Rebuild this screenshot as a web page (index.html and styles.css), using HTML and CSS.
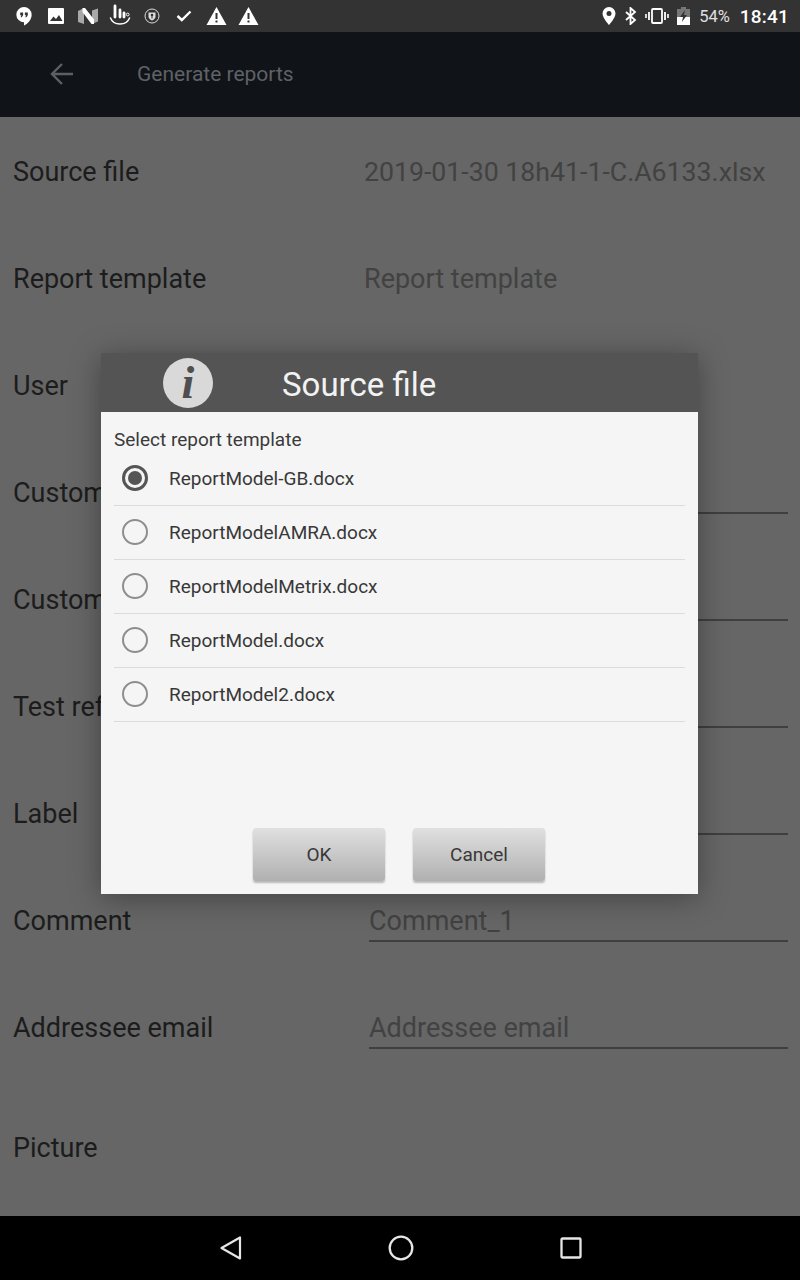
FILE: index.html
```html
<!DOCTYPE html>
<html lang="en">
<head>
    <meta charset="UTF-8">
    <meta name="viewport" content="width=device-width, initial-scale=1.0">
    <title>Generate reports</title>
    <link rel="stylesheet" href="styles.css">
</head>
<body>
    <div class="screen">
        <div class="status-bar">
            <div class="status-left">
                <span class="status-icon">
                    <svg width="18" height="20" viewBox="0 0 20 22"><path d="M10 1a8.500 8.500 0 0 0-8.500 8.500A8.500 8.500 0 0 0 10 18v3.500c4.500-2 8.500-7 8.500-12A8.500 8.500 0 0 0 10 1z" fill="#fff"/><path d="M5.800 7h3.200v3.200l-1.500 2.300H6.200l1-2.300H5.800zM11 7h3.200v3.200l-1.500 2.300h-1.300l1-2.300H11z" fill="#333"/></svg>
                </span>
                <span class="status-icon">
                    <svg width="18" height="18" viewBox="0 0 18 18"><path d="M2 1h14a1 1 0 0 1 1 1v14a1 1 0 0 1-1 1H2a1 1 0 0 1-1-1V2a1 1 0 0 1 1-1z" fill="#fff"/><path d="M3 14l3.500-4.500 2.500 2.500 3-4 3.500 6z" fill="#333"/></svg>
                </span>
                <span class="status-icon">
                    <svg width="20" height="16" viewBox="0 0 20 16"><path d="M0 3l6-3v16l-6-2z" fill="#a8a8a8"/><path d="M14 2.500l6-2v13l-6 2.500z" fill="#a8a8a8"/><path d="M4.500 0h2.500l9 11.500V16h-2.500L4.500 4z" fill="#fff"/></svg>
                </span>
                <span class="status-icon">
                    <svg width="22" height="24" viewBox="0 2 22 24" fill="none" stroke="#fff"><path d="M1.500 16c1.500 4 5 6 9.500 6s8-2 9.500-6" stroke-width="1.500" stroke-linecap="round"/><path d="M6 4v11M11 8v7M15 11v4" stroke-width="2.800" stroke-linecap="round"/><circle cx="18.700" cy="12.500" r="1.400" stroke-width="1"/></svg>
                </span>
                <span class="status-icon">
                    <svg width="16" height="16" viewBox="0 0 16 16" fill="none"><circle cx="8" cy="8" r="7" stroke="#ddd" stroke-width="1"/><path d="M4.500 4.500h7v4c0 2-2 3.500-3.500 4-1.500-.5-3.500-2-3.500-4z" fill="#ddd"/><circle cx="8" cy="7" r="1.300" fill="#333"/><path d="M7.500 8h1v2.500h-1z" fill="#333"/></svg>
                </span>
                <span class="status-icon">
                    <svg width="16" height="12" viewBox="0 0 16 12" fill="none"><path d="M1.500 6l4.300 4 8.700-8.500" stroke="#fff" stroke-width="2.400"/></svg>
                </span>
                <span class="status-icon">
                    <svg width="21" height="18" viewBox="0 0 20 18"><path d="M10 0l10 18H0z" fill="#fff"/><path d="M9 6h2v6H9zM9 13.500h2v2H9z" fill="#333"/></svg>
                </span>
                <span class="status-icon">
                    <svg width="21" height="18" viewBox="0 0 20 18"><path d="M10 0l10 18H0z" fill="#fff"/><path d="M9 6h2v6H9zM9 13.500h2v2H9z" fill="#333"/></svg>
                </span>
            </div>
            <div class="status-right">
                <svg class="pin" width="14" height="18" viewBox="0 0 14 18"><path fill-rule="evenodd" d="M7 0a6.500 6.500 0 0 0-6.500 6.500C.5 11 7 18 7 18s6.500-7 6.500-11.500A6.500 6.500 0 0 0 7 0zm0 4a2.500 2.500 0 1 1 0 5 2.500 2.500 0 0 1 0-5z" fill="#fff"/></svg>
                <svg class="bluetooth" width="12" height="18" viewBox="0 0 12 18" fill="none"><path d="M1 5l9 8-4.500 4V1L10 5l-9 8" stroke="#fff" stroke-width="1.800"/></svg>
                <svg class="vibrate" width="24" height="16" viewBox="0 0 24 16" fill="none" stroke="#fff"><rect x="7" y="1" width="10" height="14" rx="1" stroke-width="1.800"/><path d="M4 4v8M20 4v8" stroke-width="1.800"/><path d="M1 6v4M23 6v4" stroke-width="1.600"/></svg>
                <svg class="battery" width="13" height="18" viewBox="0 0 13 18"><path d="M4 0h5v2h4v16H0V2h4z" fill="#777"/><path d="M0 10h13v8H0z" fill="#fff"/><path d="M8 3L3 10h3l-1 5 5-7H7z" fill="#333"/></svg>
                <span class="battery-level">54%</span>
                <span class="clock">18:41</span>
            </div>
        </div>

        <header class="app-bar">
            <svg class="back" width="24" height="24" viewBox="0 0 24 24" fill="none"><path d="M23 12H2M12 2L2 12l10 10" stroke="#5d6063" stroke-width="2.400"/></svg>
            <h1>Generate reports</h1>
        </header>

        <div class="form">
            <div class="row">
                <div class="label">Source file</div>
                <div class="value value-file">2019-01-30 18h41-1-C.A6133.xlsx</div>
            </div>
            <div class="row">
                <div class="label">Report template</div>
                <div class="value">Report template</div>
            </div>
            <div class="row">
                <div class="label">User</div>
                <div class="value"></div>
            </div>
            <div class="row">
                <div class="label">Customer</div>
                <div class="field"></div>
            </div>
            <div class="row">
                <div class="label">Customer</div>
                <div class="field"></div>
            </div>
            <div class="row">
                <div class="label">Test ref</div>
                <div class="field"></div>
            </div>
            <div class="row">
                <div class="label">Label</div>
                <div class="field"></div>
            </div>
            <div class="row">
                <div class="label">Comment</div>
                <div class="field">Comment_1</div>
            </div>
            <div class="row">
                <div class="label">Addressee email</div>
                <div class="field">Addressee email</div>
            </div>
            <div class="row row-last">
                <div class="label">Picture</div>
            </div>
        </div>

        <nav class="nav-bar">
            <svg width="24" height="26" viewBox="0 0 24 26" fill="none"><path d="M21 2.500v21L2.500 13z" stroke="#e6e6e6" stroke-width="2.200" stroke-linejoin="round"/></svg>
            <svg width="26" height="26" viewBox="0 0 26 26" fill="none"><circle cx="13" cy="13" r="11.300" stroke="#e6e6e6" stroke-width="2.300"/></svg>
            <svg width="24" height="24" viewBox="0 0 24 24" fill="none"><rect x="2.500" y="2.500" width="19" height="19" rx="1" stroke="#e6e6e6" stroke-width="2.300"/></svg>
        </nav>

        <div class="dialog">
            <div class="dialog-head">
                <span class="info-icon">i</span>
                <h2>Source file</h2>
            </div>
            <div class="dialog-body">
                <div class="prompt">Select report template</div>
                <div class="option">
                    <span class="radio radio-on"></span>
                    <span>ReportModel-GB.docx</span>
                </div>
                <div class="option">
                    <span class="radio"></span>
                    <span>ReportModelAMRA.docx</span>
                </div>
                <div class="option">
                    <span class="radio"></span>
                    <span>ReportModelMetrix.docx</span>
                </div>
                <div class="option">
                    <span class="radio"></span>
                    <span>ReportModel.docx</span>
                </div>
                <div class="option">
                    <span class="radio"></span>
                    <span>ReportModel2.docx</span>
                </div>
                <div class="buttons">
                    <button class="btn">OK</button>
                    <button class="btn">Cancel</button>
                </div>
            </div>
        </div>
    </div>
</body>
</html>
```

FILE: styles.css
```css
body {
    font-family: Roboto, "Liberation Sans", sans-serif;
    margin: 0;
    padding: 0;
    background-color: #666;
}
.screen {
    position: relative;
    width: 800px;
    height: 1280px;
    display: flex;
    flex-direction: column;
    overflow: hidden;
}
.status-bar {
    height: 32px;
    background: #333;
    display: flex;
    justify-content: space-between;
    align-items: center;
    padding: 0 11px 0 8px;
    color: #fff;
}
.status-left {
    display: flex;
    align-items: center;
}
.status-icon {
    width: 32px;
    height: 32px;
    display: flex;
    align-items: center;
    justify-content: center;
}
.status-right {
    display: flex;
    align-items: center;
}
.pin {
    margin-right: 9px;
}
.bluetooth {
    margin-right: 8px;
}
.vibrate {
    margin-right: 8px;
}
.battery {
    margin-right: 9px;
}
.battery-level {
    font-size: 16.5px;
    color: #e0e0e0;
    margin-right: 10px;
}
.clock {
    font-size: 19px;
    font-weight: 500;
    letter-spacing: 0.2px;
}
.app-bar {
    height: 85px;
    background: #101318;
    display: flex;
    align-items: center;
    padding: 0 0 2px 50px;
    box-sizing: border-box;
}
.app-bar .back {
    margin-right: 63px;
}
.app-bar h1 {
    margin: 0;
    font-size: 21px;
    font-weight: 400;
    color: #5f6265;
}
.form {
    flex: 1;
    background: #666;
}
.row {
    height: 107px;
    display: flex;
    align-items: center;
    padding: 0 12px 0 13px;
    font-size: 27px;
}
.row-last {
    height: 134px;
}
.label {
    width: 351px;
    color: #1c1c1c;
    white-space: nowrap;
    padding-top: 2px;
}
.value {
    color: #424242;
    white-space: nowrap;
    padding-top: 2px;
}
.value-file {
    font-size: 26.7px;
}
.field {
    margin-left: 5px;
    flex: 1;
    height: 42px;
    line-height: 46px;
    border-bottom: 2px solid #3f3f3f;
    color: #424242;
}
.nav-bar {
    height: 64px;
    background: #000;
    display: flex;
    align-items: center;
    justify-content: space-between;
    padding: 0 217px 0 219px;
}
.dialog {
    position: absolute;
    left: 101px;
    top: 353px;
    width: 597px;
    height: 541px;
    display: flex;
    flex-direction: column;
    box-shadow: 0 4px 28px rgba(0, 0, 0, 0.35);
}
.dialog-head {
    height: 59px;
    background: #545454;
    display: flex;
    align-items: center;
    position: relative;
    padding-left: 181px;
}
.dialog-head h2 {
    margin: 0;
    padding-top: 3px;
    font-size: 33px;
    font-weight: 400;
    color: #f2f2f2;
}
.info-icon {
    position: absolute;
    left: 62px;
    top: 5px;
    width: 50px;
    height: 50px;
    border-radius: 50%;
    background: #d9d9d9;
    color: #4f4f4f;
    font-family: "Liberation Serif", serif;
    font-style: italic;
    font-weight: 700;
    font-size: 46px;
    line-height: 50px;
    text-align: center;
}
.dialog-body {
    flex: 1;
    background: #f5f5f5;
    padding: 0 13px;
    display: flex;
    flex-direction: column;
}
.prompt {
    font-size: 19px;
    color: #3a3a3a;
    padding-top: 16px;
    line-height: 23px;
    height: 24px;
}
.option {
    height: 53px;
    border-bottom: 1px solid #dcdcdc;
    display: flex;
    align-items: center;
    font-size: 19px;
    line-height: 25px;
    color: #383838;
    padding-left: 8px;
}
.radio {
    width: 26px;
    height: 26px;
    box-sizing: border-box;
    border: 2px solid #8e8e8e;
    border-radius: 50%;
    margin-right: 21px;
    margin-top: -1px;
    display: flex;
    align-items: center;
    justify-content: center;
}
.radio-on {
    border: 3px solid #555;
}
.radio-on::after {
    content: "";
    width: 14px;
    height: 14px;
    border-radius: 50%;
    background: #555;
}
.buttons {
    margin-top: auto;
    margin-bottom: 13px;
    display: flex;
    justify-content: center;
    gap: 28px;
    padding-right: 1px;
}
.btn {
    width: 132px;
    height: 53px;
    border: none;
    border-radius: 3px;
    background: linear-gradient(#e0e0e0, #b0b0b0);
    box-shadow: 0 2px 2px rgba(0, 0, 0, 0.25);
    font-family: inherit;
    font-size: 19px;
    color: #383838;
    padding: 0;
}
```
